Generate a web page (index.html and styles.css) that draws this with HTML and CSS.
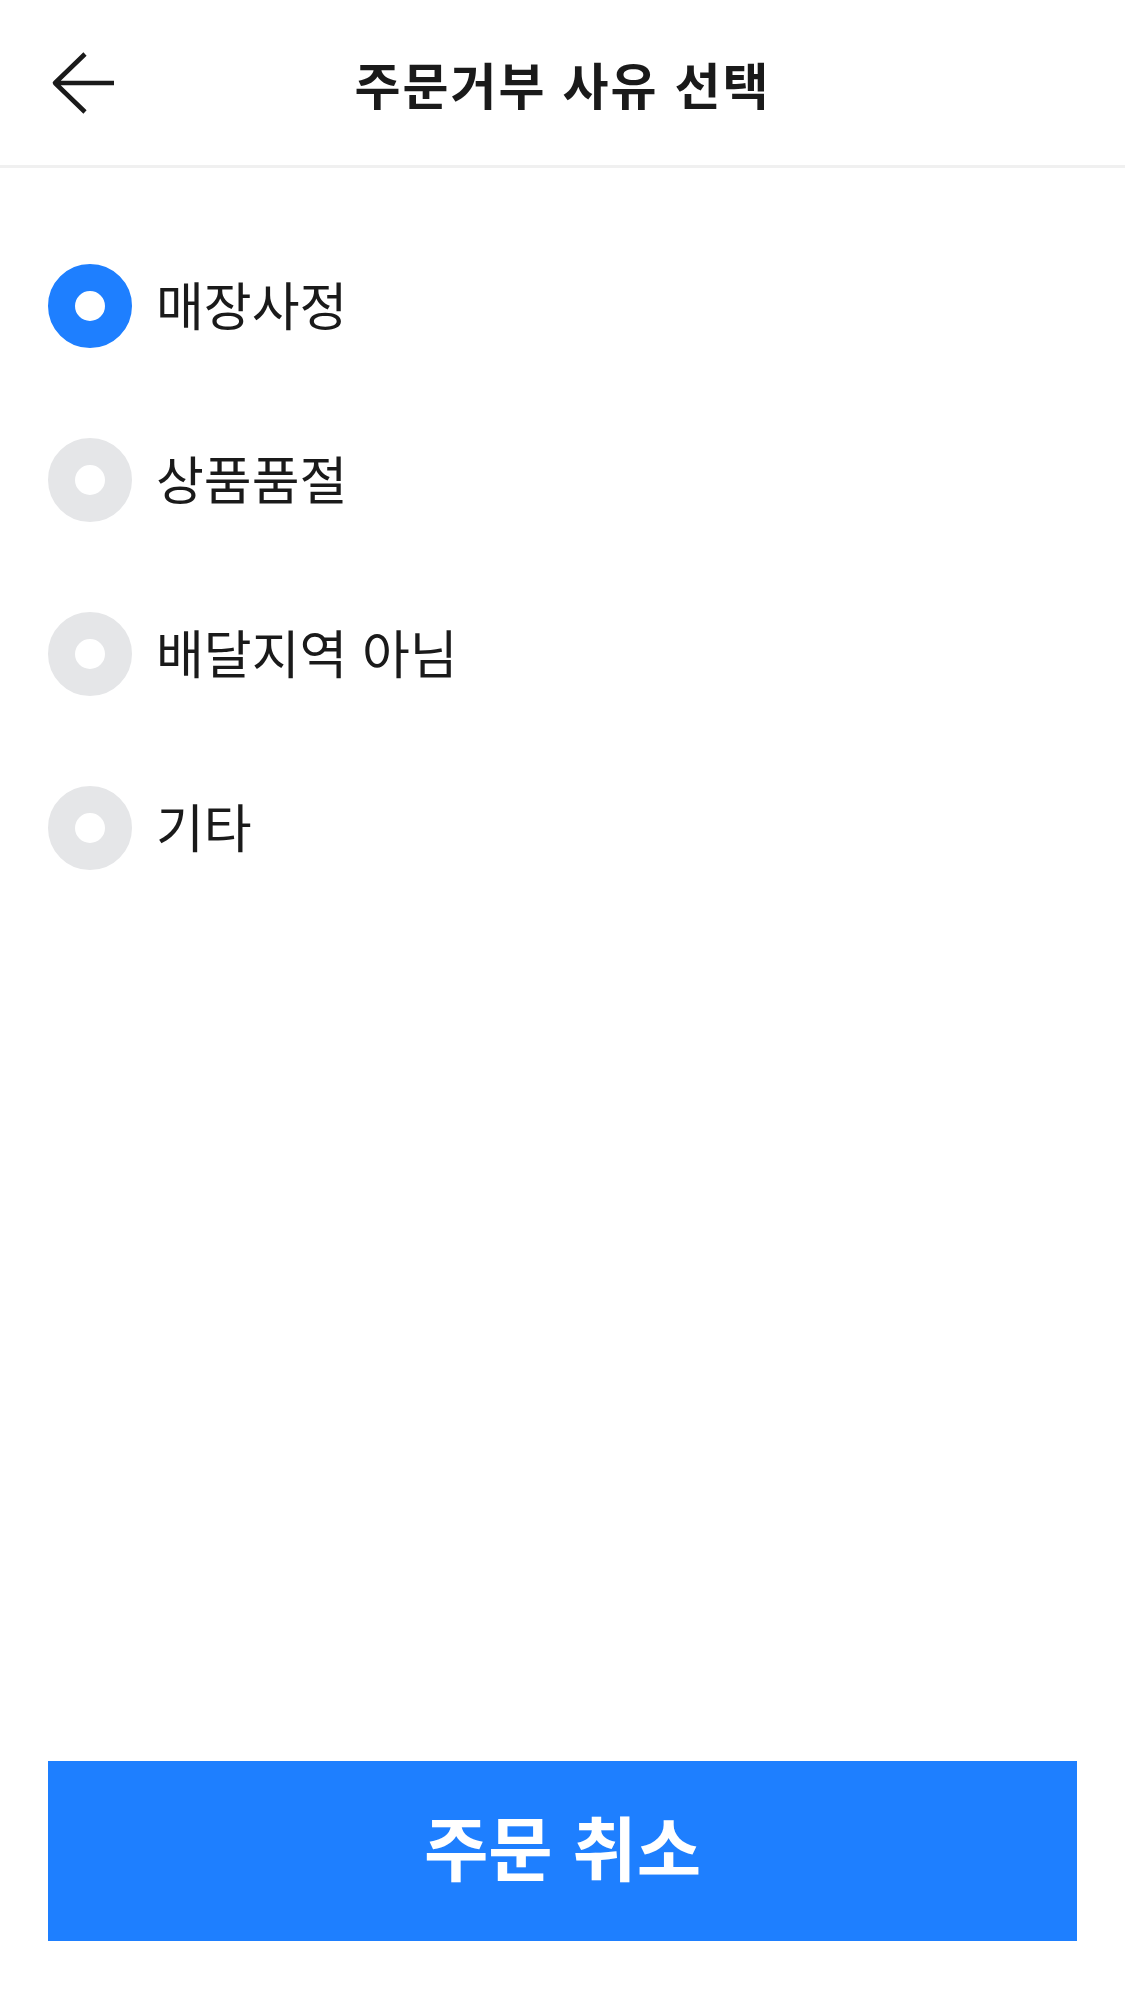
FILE: index.html
```html
<!DOCTYPE html>
<html lang="ko">
<head>
    <meta charset="UTF-8">
    <meta name="viewport" content="width=device-width, initial-scale=1.0">
    <title>주문거부 사유 선택</title>
    <link rel="stylesheet" href="styles.css">
</head>
<body>
    <div class="page">
        <header class="topbar">
            <button class="back" type="button" aria-label="뒤로">
                <svg width="66" height="66" viewBox="0 0 66 66">
                    <path d="M35 4 L5 33 L35 62 M5 33 H64" fill="none" stroke="#1a1a1a" stroke-width="4.6" stroke-linejoin="round"/>
                </svg>
            </button>
            <h1 class="title">주문거부 사유 선택</h1>
            <span></span>
        </header>

        <form class="reasons">
            <label class="reason">
                <input type="radio" name="reason" value="store" checked>
                <span class="dot"></span>
                <span class="text">매장사정</span>
            </label>
            <label class="reason">
                <input type="radio" name="reason" value="soldout">
                <span class="dot"></span>
                <span class="text">상품품절</span>
            </label>
            <label class="reason">
                <input type="radio" name="reason" value="area">
                <span class="dot"></span>
                <span class="text">배달지역 아님</span>
            </label>
            <label class="reason">
                <input type="radio" name="reason" value="etc">
                <span class="dot"></span>
                <span class="text">기타</span>
            </label>
        </form>

        <div class="footer">
            <button class="cancel" type="button">주문 취소</button>
        </div>
    </div>
</body>
</html>
```

FILE: styles.css
```css
* {
    box-sizing: border-box;
}
body {
    margin: 0;
    background-color: #fff;
    font-family: "Noto Sans CJK KR", "Noto Sans", sans-serif;
    color: #1a1a1a;
}
.page {
    display: flex;
    flex-direction: column;
    height: 100vh;
}
.topbar {
    display: grid;
    grid-template-columns: 1fr auto 1fr;
    align-items: center;
    height: 168px;
    border-bottom: 3px solid #f0f0f0;
}
.back {
    justify-self: start;
    margin-left: 50px;
    padding: 0;
    border: none;
    background: none;
    display: flex;
}
.title {
    margin: 0;
    font-size: 50px;
    font-weight: 700;
    letter-spacing: 2px;
    line-height: 1;
}
.reasons {
    padding-top: 51px;
}
.reason {
    display: flex;
    align-items: center;
    height: 174px;
    padding-left: 48px;
}
.reason input {
    display: none;
}
.dot {
    width: 84px;
    height: 84px;
    border-radius: 50%;
    border: 27px solid #e5e6e8;
    background-color: #fff;
}
.reason input:checked + .dot {
    border-color: #1e7fff;
}
.text {
    margin-left: 24px;
    padding-bottom: 4px;
    font-size: 52px;
    line-height: 1;
}
.footer {
    margin-top: auto;
    padding: 0 48px 60px;
}
.cancel {
    width: 100%;
    height: 180px;
    padding-bottom: 12px;
    border: none;
    background-color: #1e7fff;
    color: #fff;
    font-family: inherit;
    font-size: 70px;
    font-weight: 700;
}
```
